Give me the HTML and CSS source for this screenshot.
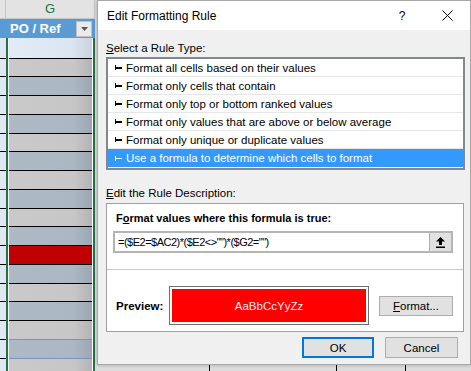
FILE: index.html
```html
<!DOCTYPE html>
<html lang="en">
<head>
  <meta charset="utf-8">
  <title>Edit Formatting Rule</title>
  <link rel="stylesheet" href="styles.css">
</head>

<body>
  <div class="sheet">
    <div class="sheet__stub">
      <div class="sheet__head"></div>
      <div class="sheet__filter"></div>
      <div class="sheet__row sheet__row_first"></div>
      <div class="sheet__row"></div>
      <div class="sheet__row"></div>
      <div class="sheet__row"></div>
      <div class="sheet__row"></div>
      <div class="sheet__row"></div>
      <div class="sheet__row"></div>
      <div class="sheet__row"></div>
      <div class="sheet__row"></div>
      <div class="sheet__row"></div>
      <div class="sheet__row"></div>
      <div class="sheet__row"></div>
      <div class="sheet__row"></div>
      <div class="sheet__row"></div>
      <div class="sheet__row"></div>
      <div class="sheet__row"></div>
      <div class="sheet__row"></div>
      <div class="sheet__row"></div>
    </div>

    <div class="sheet__col">
      <div class="sheet__head sheet__head_active">G</div>
      <div class="sheet__filter">
        <span class="sheet__filter-text">PO / Ref</span>
        <span class="sheet__dropdown">
          <svg width="7" height="4" viewBox="0 0 7 4"><path d="M0 0h7L3.5 4z" fill="#595959"/></svg>
        </span>
      </div>
      <div class="sheet__selection">
        <div class="sheet__row sheet__row_first cell_light"></div>
        <div class="sheet__row cell_gray"></div>
        <div class="sheet__row cell_blue"></div>
        <div class="sheet__row cell_gray"></div>
        <div class="sheet__row cell_blue"></div>
        <div class="sheet__row cell_gray"></div>
        <div class="sheet__row cell_blue"></div>
        <div class="sheet__row cell_gray"></div>
        <div class="sheet__row cell_blue"></div>
        <div class="sheet__row cell_gray"></div>
        <div class="sheet__row cell_blue"></div>
        <div class="sheet__row cell_red"></div>
        <div class="sheet__row cell_blue"></div>
        <div class="sheet__row cell_gray"></div>
        <div class="sheet__row cell_blue"></div>
        <div class="sheet__row cell_gray cell_table-end"></div>
        <div class="sheet__row cell_blue cell_table-end"></div>
        <div class="sheet__row cell_gray"></div>
      </div>
    </div>

    <div class="sheet__rest">
      <div class="sheet__rest-col" style="width: 115px"></div>
      <div class="sheet__rest-col" style="width: 127px"></div>
      <div class="sheet__rest-col" style="width: 69px"></div>
      <div class="sheet__rest-col"></div>
    </div>
  </div>

  <div class="dialog">
    <div class="dialog__titlebar">
      <span class="dialog__title">Edit Formatting Rule</span>
      <span class="dialog__help">?</span>
      <span class="dialog__close">
        <svg width="11" height="11" viewBox="0 0 11 11"><path d="M0.5 0.5l10 10M10.5 0.5l-10 10" stroke="#000" stroke-width="1"/></svg>
      </span>
    </div>

    <div class="dialog__body">
      <p class="dialog__label"><u>S</u>elect a Rule Type:</p>
      <ul class="rule-list">
        <li class="rule-list__item"><span class="rule-list__mark"></span>Format all cells based on their values</li>
        <li class="rule-list__item"><span class="rule-list__mark"></span>Format only cells that contain</li>
        <li class="rule-list__item"><span class="rule-list__mark"></span>Format only top or bottom ranked values</li>
        <li class="rule-list__item"><span class="rule-list__mark"></span>Format only values that are above or below average</li>
        <li class="rule-list__item"><span class="rule-list__mark"></span>Format only unique or duplicate values</li>
        <li class="rule-list__item rule-list__item_selected"><span class="rule-list__mark"></span>Use a formula to determine which cells to format</li>
      </ul>

      <p class="dialog__label dialog__label_second"><u>E</u>dit the Rule Description:</p>
      <div class="rule-desc">
        <p class="rule-desc__title">F<u>o</u>rmat values where this formula is true:</p>
        <div class="formula">
          <span class="formula__text">=($E2=$AC2)*($E2&lt;&gt;"")*($G2="")</span>
          <span class="formula__btn">
            <svg width="9" height="11" viewBox="0 0 9 11"><path d="M4.5 0L9 4.5H6V8H3V4.5H0z M0 9.5h9v1.5H0z" fill="#000"/></svg>
          </span>
        </div>
        <div class="rule-desc__sep"></div>
        <div class="preview">
          <span class="preview__label">Preview:</span>
          <div class="preview__frame">
            <div class="preview__sample">AaBbCcYyZz</div>
          </div>
          <button class="btn btn_format" type="button"><u>F</u>ormat...</button>
        </div>
      </div>

      <div class="dialog__buttons">
        <button class="btn btn_default" type="button">OK</button>
        <button class="btn" type="button">Cancel</button>
      </div>
    </div>
  </div>
</body>
</html>
```

FILE: styles.css
```css
*,
*::before,
*::after {
  box-sizing: border-box;
  margin: 0;
  padding: 0;
}

body {
  position: relative;
  width: 471px;
  height: 371px;
  overflow: hidden;
  color: #000000;
  font-family: "Liberation Sans", Arial, sans-serif;
  font-size: 11.5px;
  background-color: #ffffff;
}

/* spreadsheet behind the dialog */

.sheet {
  display: flex;
  height: 371px;
}

.sheet__stub {
  width: 6px;
  background-color: #dfe8f2;
}

.sheet__head {
  height: 19px;
  border-right: 1px solid #c6c6c6;
  border-bottom: 1px solid #c6c6c6;
  background-color: #e3e3e3;
}

.sheet__head_active {
  color: #217346;
  font-size: 13px;
  line-height: 18px;
  text-align: center;
}

.sheet__filter {
  display: flex;
  align-items: center;
  height: 19px;
  background-color: #5b9bd5;
}

.sheet__filter-text {
  flex: 1;
  padding-left: 4px;
  color: #ffffff;
  font-weight: 700;
  font-size: 13px;
}

.sheet__dropdown {
  display: flex;
  justify-content: center;
  align-items: center;
  width: 16px;
  height: 16px;
  margin-right: 3px;
  border: 1px solid #c0c0c0;
  background-color: #eaeaea;
}

.sheet__col {
  width: 89px;
}

.sheet__selection {
  padding: 0 1px;
  border-right: 2px solid #217346;
  border-left: 2px solid #217346;
  background-color: #ffffff;
}

.sheet__row {
  height: 18.75px;
  border-bottom: 1px solid #000000;
}

.sheet__row_first {
  height: 20.5px;
}

.cell_light {
  background: linear-gradient(to right, #e2ecf7 0%, #dbe6f2 75%, #c9d4e0 100%);
}

.cell_gray {
  background: linear-gradient(to right, #c9c9c9 0%, #c7c7c7 78%, #b4b4b4 100%);
}

.cell_blue {
  background: linear-gradient(to right, #adb9c5 0%, #abb7c3 78%, #9ca7b3 100%);
}

.cell_red {
  background-color: #c00000;
}

.cell_table-end {
  border-bottom-color: #7b93c4;
}

.sheet__rest {
  display: flex;
  flex: 1;
  background-color: #dddddd;
}

.sheet__rest-col {
  border-right: 1px solid #000000;
}

.sheet__rest-col:last-child {
  flex: 1;
  border-right: none;
}

/* dialog */

.dialog {
  position: absolute;
  top: 0;
  left: 97px;
  display: flex;
  flex-direction: column;
  width: 374px;
  height: 365px;
  border: 1px solid #a8a8a8;
  background-color: #f0f0f0;
  box-shadow: 0 0 4px rgba(0, 0, 0, 0.25);
}

.dialog__titlebar {
  display: flex;
  align-items: center;
  height: 29px;
  padding-left: 9px;
  background-color: #ffffff;
}

.dialog__title {
  flex: 1;
  font-size: 12px;
}

.dialog__help {
  width: 20px;
  margin-right: 25px;
  font-size: 12px;
  text-align: center;
}

.dialog__close {
  display: flex;
  justify-content: center;
  width: 20px;
  margin-right: 13px;
}

.dialog__body {
  display: flex;
  flex-direction: column;
  flex: 1;
  padding: 0 5px 0 8px;
}

.dialog__label {
  height: 16px;
  margin-top: 10px;
  line-height: 16px;
}

.dialog__label_second {
  margin-top: 15px;
}

.rule-list {
  height: 113px;
  margin-top: 1px;
  border: 2px solid #828790;
  list-style: none;
  background-color: #ffffff;
}

.rule-list__item {
  display: flex;
  align-items: center;
  height: 18px;
  padding-left: 7px;
  border-bottom: 1px solid #e6e6e6;
  white-space: nowrap;
}

.rule-list__item:last-child {
  border-bottom: none;
}

.rule-list__item_selected {
  color: #ffffff;
  background-color: #3399ff;
}

.rule-list__mark {
  position: relative;
  width: 7px;
  height: 5px;
  margin-right: 4px;
  border-left: 1.5px solid currentColor;
}

.rule-list__mark::after {
  content: "";
  position: absolute;
  top: 2px;
  left: 0;
  width: 6px;
  height: 1.5px;
  background-color: currentColor;
}

.rule-desc {
  display: flex;
  flex-direction: column;
  height: 129px;
  margin-top: 2px;
  margin-right: 1px;
  border: 1px solid #a0a0a0;
  background-color: #ffffff;
}

.rule-desc__title {
  height: 16px;
  margin: 6px 0 0 9px;
  font-weight: 700;
  font-size: 11px;
  line-height: 16px;
}

.formula {
  display: flex;
  align-items: center;
  height: 22px;
  margin: 5px 10px 0 6px;
  border: 2px solid #b4b4b4;
}

.formula__text {
  flex: 1;
  padding-left: 3px;
  font-size: 11px;
  letter-spacing: -0.5px;
}

.formula__btn {
  display: flex;
  justify-content: center;
  align-items: center;
  width: 22px;
  height: 18px;
  border-left: 1px solid #adadad;
  background-color: #e1e1e1;
}

.rule-desc__sep {
  height: 1px;
  margin-top: 16px;
  background-color: #c8c8c8;
}

.preview {
  display: flex;
  align-items: center;
  margin-top: 16px;
  padding-left: 9px;
}

.preview__label {
  width: 53px;
  font-weight: 700;
}

.preview__frame {
  width: 200px;
  height: 39px;
  padding: 2px;
  border: 1px solid #707070;
  background-color: #ffffff;
}

.preview__sample {
  display: flex;
  justify-content: center;
  align-items: center;
  height: 100%;
  color: #fff0f0;
  background-color: #ff0000;
}

.btn {
  width: 73px;
  height: 21px;
  border: 1px solid #adadad;
  color: #000000;
  font-family: inherit;
  font-size: inherit;
  background-color: #e1e1e1;
}

.btn_format {
  width: 74px;
  height: 20px;
  margin-left: 10px;
}

.dialog__buttons {
  display: flex;
  justify-content: flex-end;
  gap: 11px;
  margin-top: 5px;
  padding-right: 7px;
}

.btn_default {
  width: 72px;
  border: 2px solid #0078d7;
}
```
